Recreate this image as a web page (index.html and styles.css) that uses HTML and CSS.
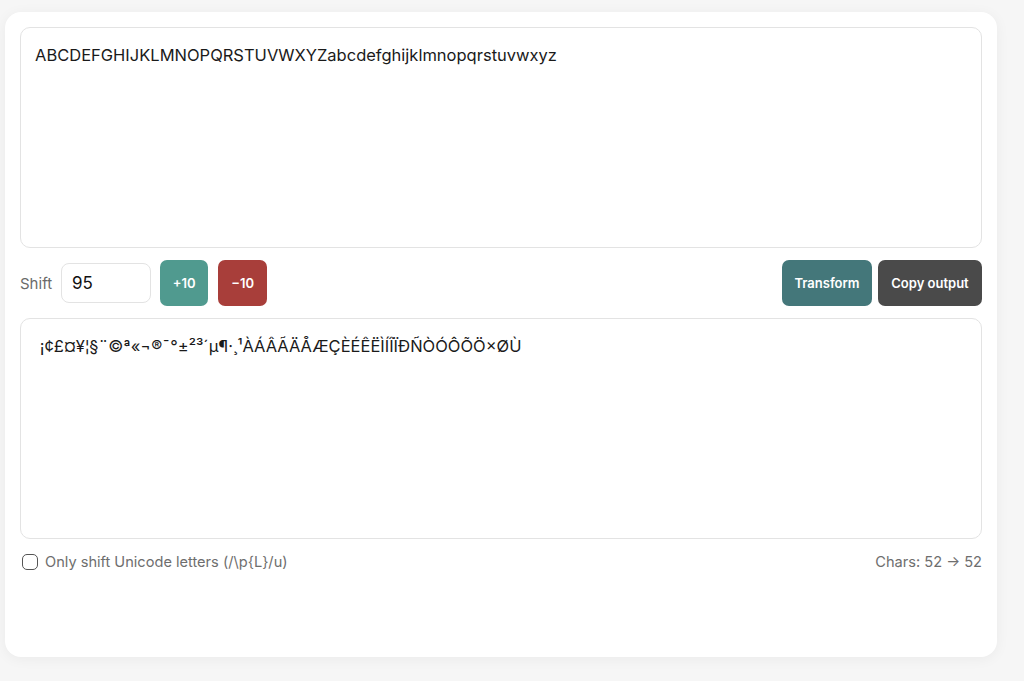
FILE: index.html
```html
<!DOCTYPE html>
<html lang="en">
<head>
<meta charset="utf-8">
<title>Unicode shift</title>
<link rel="stylesheet" href="styles.css">
</head>
<body>
<main class="card">
  <textarea class="box" id="input" spellcheck="false">ABCDEFGHIJKLMNOPQRSTUVWXYZabcdefghijklmnopqrstuvwxyz</textarea>
  <div class="controls">
    <label class="shift-label" for="shift">Shift</label>
    <input class="shift-input" id="shift" type="text" value="95">
    <button class="btn btn-plus">+10</button>
    <button class="btn btn-minus">−10</button>
    <div class="spacer"></div>
    <button class="btn btn-transform">Transform</button>
    <button class="btn btn-copy">Copy output</button>
  </div>
  <textarea class="box" id="output" readonly spellcheck="false">&#160;¡¢£¤¥¦§¨©ª«¬&#173;®¯°±²³´µ¶·¸¹ÀÁÂÃÄÅÆÇÈÉÊËÌÍÎÏÐÑÒÓÔÕÖ×ØÙ</textarea>
  <div class="footer">
    <label class="check"><span class="checkbox"></span>Only shift Unicode letters (/\p{L}/u)</label>
    <span class="count">Chars: 52 → 52</span>
  </div>
</main>
</body>
</html>
```
FILE: styles.css
```css
html, body {
  margin: 0;
  background: #f6f6f6;
}
body {
  padding: 12px 27px 24px 5px;
  font-family: Inter, "Liberation Sans", sans-serif;
  color: #1c1c1c;
}
.card {
  background: #fff;
  border-radius: 16px;
  box-shadow: 0 2px 14px rgba(0, 0, 0, 0.05);
  padding: 15px 15px 0 15px;
  height: 645px;
  box-sizing: border-box;
  display: flex;
  flex-direction: column;
}
.box {
  display: block;
  width: 100%;
  height: 221px;
  box-sizing: border-box;
  border: 1px solid #e3e3e3;
  border-radius: 10px;
  padding: 16px 14px;
  font-family: Inter, "Liberation Sans", sans-serif;
  font-size: 16.5px;
  line-height: 22px;
  color: #1a1a1a;
  resize: none;
  outline: none;
  background: #fff;
}
.controls {
  display: flex;
  align-items: center;
  margin: 12px 0;
  height: 46px;
}
.shift-label {
  font-size: 15px;
  color: #6b6b6b;
  margin-right: 9px;
}
.shift-input {
  width: 90px;
  height: 40px;
  box-sizing: border-box;
  border: 1px solid #e3e3e3;
  border-radius: 8px;
  padding: 0 10px;
  font-family: Inter, "Liberation Sans", sans-serif;
  font-size: 17px;
  color: #111;
  margin-right: 9px;
  outline: none;
}
.btn {
  height: 46px;
  border: 0;
  border-radius: 7px;
  color: #fff;
  font-family: Inter, "Liberation Sans", sans-serif;
  font-size: 13px;
  font-weight: 600;
  padding: 0;
  cursor: pointer;
}
.btn-plus {
  background: #509a8f;
  width: 48px;
  margin-right: 10px;
}
.btn-minus {
  background: #a83e3a;
  width: 49px;
}
.spacer { flex: 1; }
.btn-transform {
  background: #44777a;
  width: 90px;
  margin-right: 6px;
}
.btn-copy {
  background: #4a4a4a;
  width: 104px;
}
.footer {
  display: flex;
  justify-content: space-between;
  align-items: center;
  margin-top: 14px;
  font-size: 14.6px;
  color: #6e6e6e;
}
.check {
  display: flex;
  align-items: center;
}
.checkbox {
  width: 16px;
  height: 16px;
  box-sizing: border-box;
  border: 1.5px solid #555;
  border-radius: 5px;
  margin: 0 7px 0 2px;
}
```
